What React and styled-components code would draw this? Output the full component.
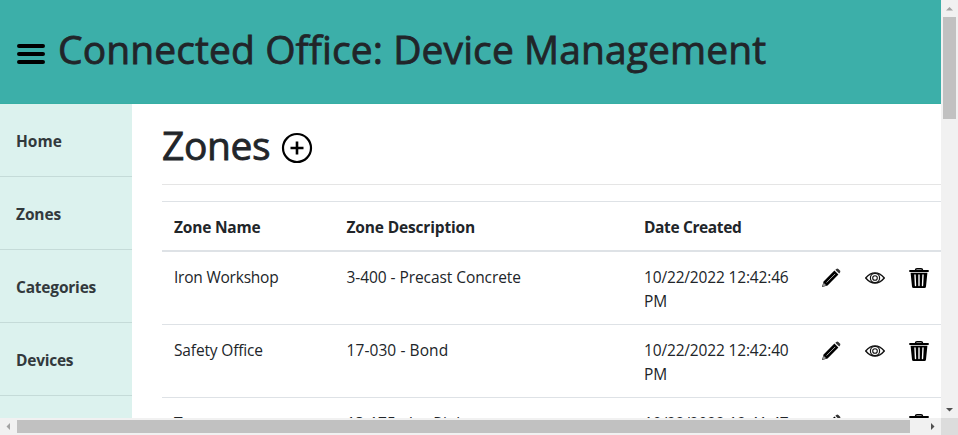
import React from 'react';
import styled, { createGlobalStyle } from 'styled-components';

const Global = createGlobalStyle`
  *, *::before, *::after { box-sizing: border-box; }
  html, body { margin: 0; padding: 0; overflow: hidden; }
  body { font-family: "Open Sans", "Noto Sans", sans-serif; font-size: 15.5px; line-height: 24px; color: #212529; background: #fff; }
`;

const Window = styled.div`
  display: grid;
  grid-template-columns: 941px 17px;
  grid-template-rows: 418px 17px;
  width: 958px;
  height: 435px;
  overflow: hidden;
`;
const Viewport = styled.div`
  overflow: hidden;
  background: #fff;
`;
const Header = styled.header`
  display: flex;
  align-items: center;
  height: 104px;
  padding-left: 17px;
  background: #3cafa9;
  border-bottom: 1px solid #37afa4;
`;
const MenuIcon = styled.svg`
  flex: none;
  width: 28px;
  height: 22px;
  margin: 5px 13px 0 0;
`;
const Title = styled.h1`
  margin: 0 0 ${(p) => p.$lift || 0}px;
  font-size: 39px;
  line-height: 48px;
  font-weight: 500;
  white-space: nowrap;
  letter-spacing: ${(p) => p.$track || 0}px;
  -webkit-text-stroke: 0.8px #212529;
`;
const Body = styled.div`
  display: flex;
  align-items: flex-start;
`;
const Sidebar = styled.nav`
  flex: none;
  width: 132px;
  height: 400px;
  background: #dcf2ee;
`;
const NavLink = styled.a`
  display: block;
  height: 73px;
  padding: 25px 16px 23px;
  font-weight: 700;
  color: #32393c;
  border-bottom: 1px solid #c5dbd8;
  white-space: nowrap;
`;
const Main = styled.main`
  flex: none;
  width: 809px;
  padding: 17px 0 0 30px;
`;
const Heading = styled.div`
  display: flex;
  align-items: center;
  height: 48px;
  gap: 11px;
`;
const AddIcon = styled.svg`
  width: 32px;
  height: 32px;
  margin-top: 6px;
`;
const Rule = styled.hr`
  height: 1px;
  margin: 15px 0 16px;
  border: 0;
  background: #e5e5e5;
`;
const Row = styled.div`
  display: grid;
  grid-template-columns: 172.5px 297.5px 178px 131px;
  height: 73px;
  border-top: 1px solid #dee2e6;
`;
const HeadRow = styled(Row)`
  height: 51px;
  font-weight: 700;
  border-bottom: 2px solid #dee2e6;
`;
const FirstRow = styled(Row)`
  height: 72px;
  border-top: 0;
`;
const Cell = styled.div`
  padding: 13px 12px 11px;
`;
const Text = styled.span`
  white-space: nowrap;
  letter-spacing: ${(p) => p.$track || 0}px;
`;
const Actions = styled.div`
  display: flex;
  gap: 24px;
  padding: 16px 0 0 11px;
`;
const ActionIcon = styled.svg`
  flex: none;
  width: 20px;
  height: 20px;
`;

const Track = styled.div`
  display: flex;
  flex-direction: ${(p) => (p.$vertical ? 'column' : 'row')};
  align-items: center;
  background: #f1f1f1;
`;
const Thumb = styled.div`
  width: ${(p) => p.$w}px;
  height: ${(p) => p.$h}px;
  background: #c1c1c1;
`;
const Arrow = styled.svg`
  flex: none;
  width: 17px;
  height: 17px;
`;
const Gap = styled.div`
  flex: 1;
`;
const Corner = styled.div`
  background: #dcdcdc;
`;

const PencilIcon = () => (
  <ActionIcon viewBox="0 0 20 20">
    <path d="M1 19 2.6 13.4 13.4 2.6 17.4 6.6 6.6 17.4Z" fill="#000" />
    <path d="M14.3 1.8 15.4.9Q16.4.2 17.4 1.1L18.9 2.6Q19.8 3.6 19 4.6L18.2 5.6Z" fill="#333" />
    <path d="M5.6 14.5 14.2 5.9" stroke="#aaa" strokeWidth="1" />
    <path d="M2.6 14.7 5.3 17.3 1.4 18.7Z" fill="#999" />
  </ActionIcon>
);
const EyeIcon = () => (
  <ActionIcon viewBox="0 0 20 20" fill="none" stroke="#111">
    <path d="M.7 10Q5 4.9 10 4.9T19.3 10Q15 15.1 10 15.1T.7 10Z" strokeWidth="1.4" />
    <circle cx="10" cy="10" r="4.6" strokeWidth="1.2" />
    <circle cx="10" cy="10" r="2.3" strokeWidth="1.1" />
  </ActionIcon>
);
const TrashIcon = () => (
  <ActionIcon viewBox="0 0 20 20">
    <path d="M6.3 2.5Q6.5.7 8 .7H12Q13.5.7 13.7 2.5" fill="none" stroke="#000" strokeWidth="1.4" />
    <path d="M.3 2H19.7V4H.3ZM1.6 4.8H18.4L17 18.5Q16.9 20 15.4 20H4.6Q3.1 20 3 18.5Z" fill="#000" />
    <path d="M6 7 6.5 17.5M10 7V17.5M14 7 13.5 17.5" stroke="#fff" strokeWidth="1.4" strokeLinecap="round" />
  </ActionIcon>
);

const nav = [['Home', 0], ['Zones', -0.1], ['Categories', -0.2], ['Devices', -0.25], ['', 0]];
const rows = [
  { name: 'Iron Workshop', nt: -0.22, desc: '3-400 - Precast Concrete', dt: -0.07, date: '10/22/2022 12:42:46' },
  { name: 'Safety Office', nt: -0.15, desc: '17-030 - Bond', dt: 0.08, date: '10/22/2022 12:42:40' },
  { name: 'Tower', nt: 0, desc: '13-175 - Ice Rink', dt: 0, date: '10/22/2022 12:41:47' },
];

export default function App() {
  return (
    <>
      <Global />
      <Window>
        <Viewport>
          <Header>
            <MenuIcon viewBox="0 0 28 22">
              <path d="M2 3H26M2 11H26M2 19H26" stroke="#000" strokeWidth="4" strokeLinecap="round" />
            </MenuIcon>
            <Title $track={0.09} $lift={6}>Connected Office: Device Management</Title>
          </Header>
          <Body>
            <Sidebar>
              {nav.map(([label, track]) => (
                <NavLink key={label}><Text $track={track}>{label}</Text></NavLink>
              ))}
            </Sidebar>
            <Main>
              <Heading>
                <Title $track={-0.4}>Zones</Title>
                <AddIcon viewBox="0 0 32 32" fill="none" stroke="#000">
                  <circle cx="16" cy="16" r="14" strokeWidth="2.2" />
                  <path d="M9.5 16H22.5M16 9.5V22.5" strokeWidth="2.6" />
                </AddIcon>
              </Heading>
              <Rule />
              <HeadRow>
                <Cell><Text $track={-0.2}>Zone Name</Text></Cell>
                <Cell><Text $track={-0.16}>Zone Description</Text></Cell>
                <Cell><Text $track={-0.37}>Date Created</Text></Cell>
              </HeadRow>
              {rows.map((r, i) => (
                <Row as={i ? undefined : FirstRow} key={r.name}>
                  <Cell><Text $track={r.nt}>{r.name}</Text></Cell>
                  <Cell><Text $track={r.dt}>{r.desc}</Text></Cell>
                  <Cell><Text $track={-0.16}>{r.date}</Text><br /><Text>PM</Text></Cell>
                  <Actions><PencilIcon /><EyeIcon /><TrashIcon /></Actions>
                </Row>
              ))}
            </Main>
          </Body>
        </Viewport>
        <Track $vertical>
          <Arrow viewBox="0 0 17 17"><path d="M5 10.5 8.5 7 12 10.5Z" fill="#a3a3a3" /></Arrow>
          <Thumb $w={13} $h={102} />
          <Gap />
          <Arrow viewBox="0 0 17 17"><path d="M5 7 12 7 8.5 10.5Z" fill="#505050" /></Arrow>
        </Track>
        <Track>
          <Arrow viewBox="0 0 17 17"><path d="M10 5 10 12 6.5 8.5Z" fill="#a3a3a3" /></Arrow>
          <Thumb $w={893} $h={13} />
          <Gap />
          <Arrow viewBox="0 0 17 17"><path d="M7 5 10.5 8.5 7 12Z" fill="#505050" /></Arrow>
        </Track>
        <Corner />
      </Window>
    </>
  );
}
